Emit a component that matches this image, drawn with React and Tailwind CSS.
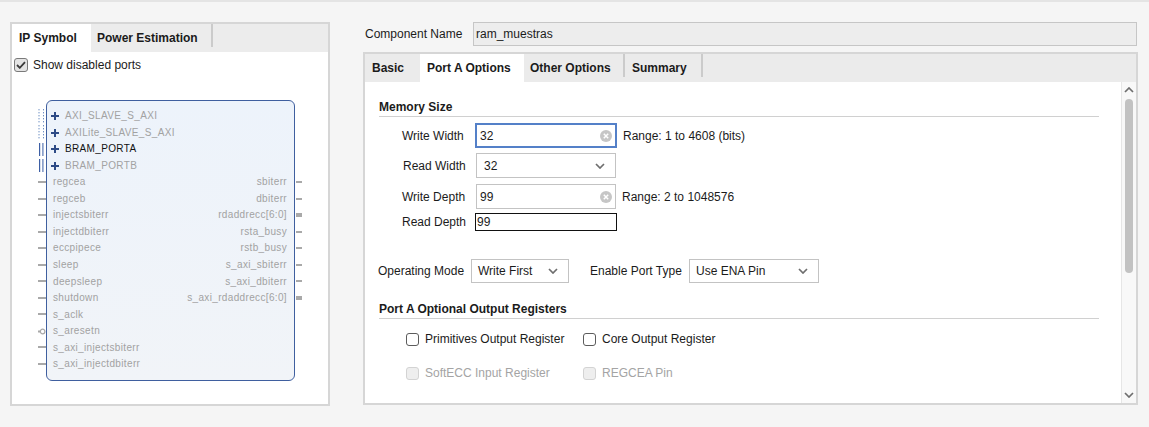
import React from "react";

const busPins = [
  { name: "AXI_SLAVE_S_AXI", kind: "dots" },
  { name: "AXILite_SLAVE_S_AXI", kind: "dots" },
  { name: "BRAM_PORTA", kind: "lines", active: true },
  { name: "BRAM_PORTB", kind: "lines" },
];
const leftScalar = [
  "regcea",
  "regceb",
  "injectsbiterr",
  "injectdbiterr",
  "eccpipece",
  "sleep",
  "deepsleep",
  "shutdown",
  "s_aclk",
  "s_aresetn",
  "s_axi_injectsbiterr",
  "s_axi_injectdbiterr",
];
const rightPins = [
  { n: "sbiterr" },
  { n: "dbiterr" },
  { n: "rdaddrecc[6:0]", bus: true },
  { n: "rsta_busy" },
  { n: "rstb_busy" },
  { n: "s_axi_sbiterr" },
  { n: "s_axi_dbiterr" },
  { n: "s_axi_rdaddrecc[6:0]", bus: true },
];

function Plus() {
  return (
    <svg width="8" height="8" viewBox="0 0 8 8" className="shrink-0">
      <path d="M0 4h8M4 0v8" stroke="#2e4b86" strokeWidth="2" />
    </svg>
  );
}

function BusMarker({ kind }) {
  if (kind === "dots") {
    const ys = [0, 3, 6, 9, 12];
    return (
      <svg width="8" height="14" viewBox="0 0 8 14" className="absolute left-[-9px] top-[1px]">
        {ys.map((y) => (
          <g key={y}>
            <rect x="0.5" y={y} width="1" height="1.4" fill="#6f8fc4" />
            <rect x="5" y={y} width="1" height="1.4" fill="#6f8fc4" />
          </g>
        ))}
      </svg>
    );
  }
  return (
    <svg width="8" height="13" viewBox="0 0 8 13" className="absolute left-[-9px] top-[2px]">
      <rect x="1" y="0" width="1.2" height="13" fill="#3d5fa5" />
      <rect x="4.3" y="0" width="1.2" height="13" fill="#5a79b6" />
    </svg>
  );
}

function IpBlock() {
  const rows = [];
  busPins.forEach((p) => {
    rows.push(
      <div key={p.name} className="relative h-[16.55px] flex items-center pl-[4px]">
        <BusMarker kind={p.kind} />
        <Plus />
        <span className={"ml-[6px] " + (p.active ? "text-[#111111]" : "text-[#a2a2a2]")}>{p.name}</span>
      </div>
    );
  });
  leftScalar.forEach((n, i) => {
    const r = rightPins[i];
    rows.push(
      <div key={n} className="relative h-[16.55px] flex items-center justify-between pl-[6px] pr-[7px]">
        {n === "s_aresetn" ? (
          <svg width="9" height="7" viewBox="0 0 9 7" className="absolute left-[-9px] top-[5px]">
            <path d="M0 3.5h2" stroke="#a9a9a9" strokeWidth="2" />
            <circle cx="4.6" cy="3.5" r="2.3" fill="none" stroke="#a9a9a9" strokeWidth="1.3" />
          </svg>
        ) : (
          <div className="absolute left-[-9px] top-[7px] w-[8px] h-[2px] bg-[#a9a9a9]" />
        )}
        <span>{n}</span>
        {r && <span>{r.n}</span>}
        {r &&
          (r.bus ? (
            <div className="absolute right-[-8px] top-[6px] w-[6px] h-[4px] bg-[#a9a9a9]" />
          ) : (
            <div className="absolute right-[-8px] top-[7px] w-[6px] h-[2px] bg-[#a9a9a9]" />
          ))}
      </div>
    );
  });
  return (
    <div className="ml-[34px] mt-[28px] w-[249px] h-[281px] shrink-0 rounded-[6px] border border-[#3f5f9f] bg-linear-to-b from-[#edf3fb] to-[#f1f4f8] pt-[6.8px] text-[10px] tracking-[0.35px] text-[#a2a2a2] leading-none">
      {rows}
    </div>
  );
}

function CheckedBox() {
  return (
    <div className="w-[14px] h-[14px] rounded-[3px] border border-[#7a7a7a] bg-[#e4e4e4] flex items-center justify-center shrink-0">
      <svg width="10" height="8" viewBox="0 0 10 8">
        <path d="M1 4l2.8 2.8L9 1.2" stroke="#3a3a3a" strokeWidth="1.8" fill="none" />
      </svg>
    </div>
  );
}

function LeftPanel() {
  return (
    <div className="ml-[10px] mt-[20px] w-[320px] h-[384px] shrink-0 border-2 border-[#d6d6d6] bg-white flex flex-col">
      <div className="h-[28px] bg-[#ececec] flex shrink-0">
        <div className="w-[79px] bg-white pl-[7px] flex items-center font-bold">IP Symbol</div>
        <div className="w-[120px] pl-[6px] flex items-center font-bold">Power Estimation</div>
        <div className="w-[2px] h-[23px] bg-[#cbcbcb]" />
      </div>
      <div className="flex items-center h-[14px] mt-[6px] ml-[2px]">
        <CheckedBox />
        <span className="ml-[5px]">Show disabled ports</span>
      </div>
      <IpBlock />
    </div>
  );
}

function Chevron() {
  return (
    <svg width="10" height="6" viewBox="0 0 10 6" className="shrink-0">
      <path d="M1 1l4 4 4-4" stroke="#6e6e6e" strokeWidth="1.7" fill="none" />
    </svg>
  );
}

function ClearIcon() {
  return (
    <svg width="12" height="12" viewBox="0 0 12 12" className="shrink-0">
      <circle cx="6" cy="6" r="6" fill="#c6c6c6" />
      <path d="M3.8 3.8l4.4 4.4M8.2 3.8l-4.4 4.4" stroke="#ffffff" strokeWidth="1.5" />
    </svg>
  );
}

function Box({ disabled }) {
  return (
    <div
      className={
        "w-[13px] h-[13px] rounded-[3px] border shrink-0 " +
        (disabled ? "border-[#d3d3d3] bg-[#eeeeee]" : "border-[#5c5c5c] bg-white")
      }
    />
  );
}

function RightPanel() {
  return (
    <div className="ml-[33px] mt-[20px] w-[775px] shrink-0 flex flex-col">
      <div className="h-[24px] flex items-center">
        <div className="w-[110px] pl-[2px]">Component Name</div>
        <div className="w-[664px] h-[24px] bg-[#ededed] border border-[#c6c6c6] flex items-center pl-[2px]">
          ram_muestras
        </div>
      </div>
      <div className="mt-[6px] h-[353px] border-2 border-[#d6d6d6] flex flex-col">
        <div className="h-[28px] bg-[#ebebeb] flex shrink-0">
          <div className="w-[55px] pl-[7px] flex items-center font-bold">Basic</div>
          <div className="w-[104px] pl-[7px] bg-white flex items-center font-bold">Port A Options</div>
          <div className="w-[99px] pl-[6px] flex items-center font-bold">Other Options</div>
          <div className="w-[2px] h-[23px] bg-[#cbcbcb]" />
          <div className="w-[76px] pl-[7px] flex items-center font-bold">Summary</div>
          <div className="w-[2px] h-[23px] bg-[#cbcbcb]" />
        </div>
        <div className="flex-1 flex min-h-0">
          <div className="flex-1 bg-white pl-[14px] pr-[22px] flex flex-col">
            <div className="pt-[18px] pb-[2px] border-b border-[#d0d0d0] font-bold leading-[14px]">Memory Size</div>

            <div className="flex items-center mt-[6px] h-[25px]">
              <div className="w-[96px] pl-[23px]">Write Width</div>
              <div className="w-[142px] h-[25px] border-2 border-[#5480c8] flex items-center justify-between pl-[3px] pr-[3px]">
                <span>32</span>
                <ClearIcon />
              </div>
              <span className="ml-[6px]">Range: 1 to 4608 (bits)</span>
            </div>

            <div className="flex items-center mt-[5px] h-[25px]">
              <div className="w-[97px] pl-[24px]">Read Width</div>
              <div className="w-[140px] h-[25px] border border-[#c3c3c3] flex items-center justify-between pl-[7px] pr-[10px]">
                <span>32</span>
                <Chevron />
              </div>
            </div>

            <div className="flex items-center mt-[6px] h-[25px]">
              <div className="w-[97px] pl-[23px]">Write Depth</div>
              <div className="w-[140px] h-[25px] border border-[#c3c3c3] flex items-center justify-between pl-[3px] pr-[3px]">
                <span>99</span>
                <ClearIcon />
              </div>
              <span className="ml-[6px]">Range: 2 to 1048576</span>
            </div>

            <div className="flex items-center mt-[4px] h-[18px]">
              <div className="w-[96px] pl-[23px]">Read Depth</div>
              <div className="w-[142px] h-[18px] border border-[#111111] flex items-center pl-[1px]">99</div>
            </div>

            <div className="flex items-center mt-[28px] h-[24px] ml-[-1px]">
              <div className="w-[93px]">Operating Mode</div>
              <div className="w-[98px] h-[24px] border border-[#c3c3c3] flex items-center justify-between pl-[6px] pr-[10px]">
                <span>Write First</span>
                <Chevron />
              </div>
              <div className="w-[99px] ml-[21px]">Enable Port Type</div>
              <div className="w-[130px] h-[24px] border border-[#c3c3c3] flex items-center justify-between pl-[6px] pr-[10px]">
                <span>Use ENA Pin</span>
                <Chevron />
              </div>
            </div>

            <div className="mt-[19px] pb-[2px] border-b border-[#d0d0d0] font-bold leading-[14px]">
              Port A Optional Output Registers
            </div>

            <div className="flex items-center mt-[13px] h-[14px] pl-[27px]">
              <div className="w-[177px] flex items-center">
                <Box />
                <span className="ml-[6px]">Primitives Output Register</span>
              </div>
              <div className="flex items-center">
                <Box />
                <span className="ml-[6px]">Core Output Register</span>
              </div>
            </div>

            <div className="flex items-center mt-[20px] h-[14px] pl-[27px] text-[#a4a4a4]">
              <div className="w-[177px] flex items-center">
                <Box disabled />
                <span className="ml-[6px]">SoftECC Input Register</span>
              </div>
              <div className="flex items-center">
                <Box disabled />
                <span className="ml-[6px]">REGCEA Pin</span>
              </div>
            </div>
          </div>
          <div className="w-[15px] bg-[#f8f8f8] border-l border-[#e6e6e6] flex flex-col items-center pt-[5px] pb-[5px]">
            <svg width="10" height="6" viewBox="0 0 10 6">
              <path d="M1 5l4-4 4 4" stroke="#6e6e6e" strokeWidth="1.7" fill="none" />
            </svg>
            <div className="mt-[6px] w-[8px] h-[174px] rounded-full bg-[#c2c2c2]" />
            <div className="flex-1" />
            <svg width="10" height="6" viewBox="0 0 10 6">
              <path d="M1 1l4 4 4-4" stroke="#6e6e6e" strokeWidth="1.7" fill="none" />
            </svg>
          </div>
        </div>
      </div>
    </div>
  );
}

export default function App() {
  return (
    <div className="w-[1149px] h-[427px] overflow-hidden bg-[#f5f5f5] border-t-2 border-[#e4e4e4] flex items-start font-['Liberation_Sans',Arial,sans-serif] text-[12px] text-[#1b1b1b]">
      <LeftPanel />
      <RightPanel />
    </div>
  );
}
